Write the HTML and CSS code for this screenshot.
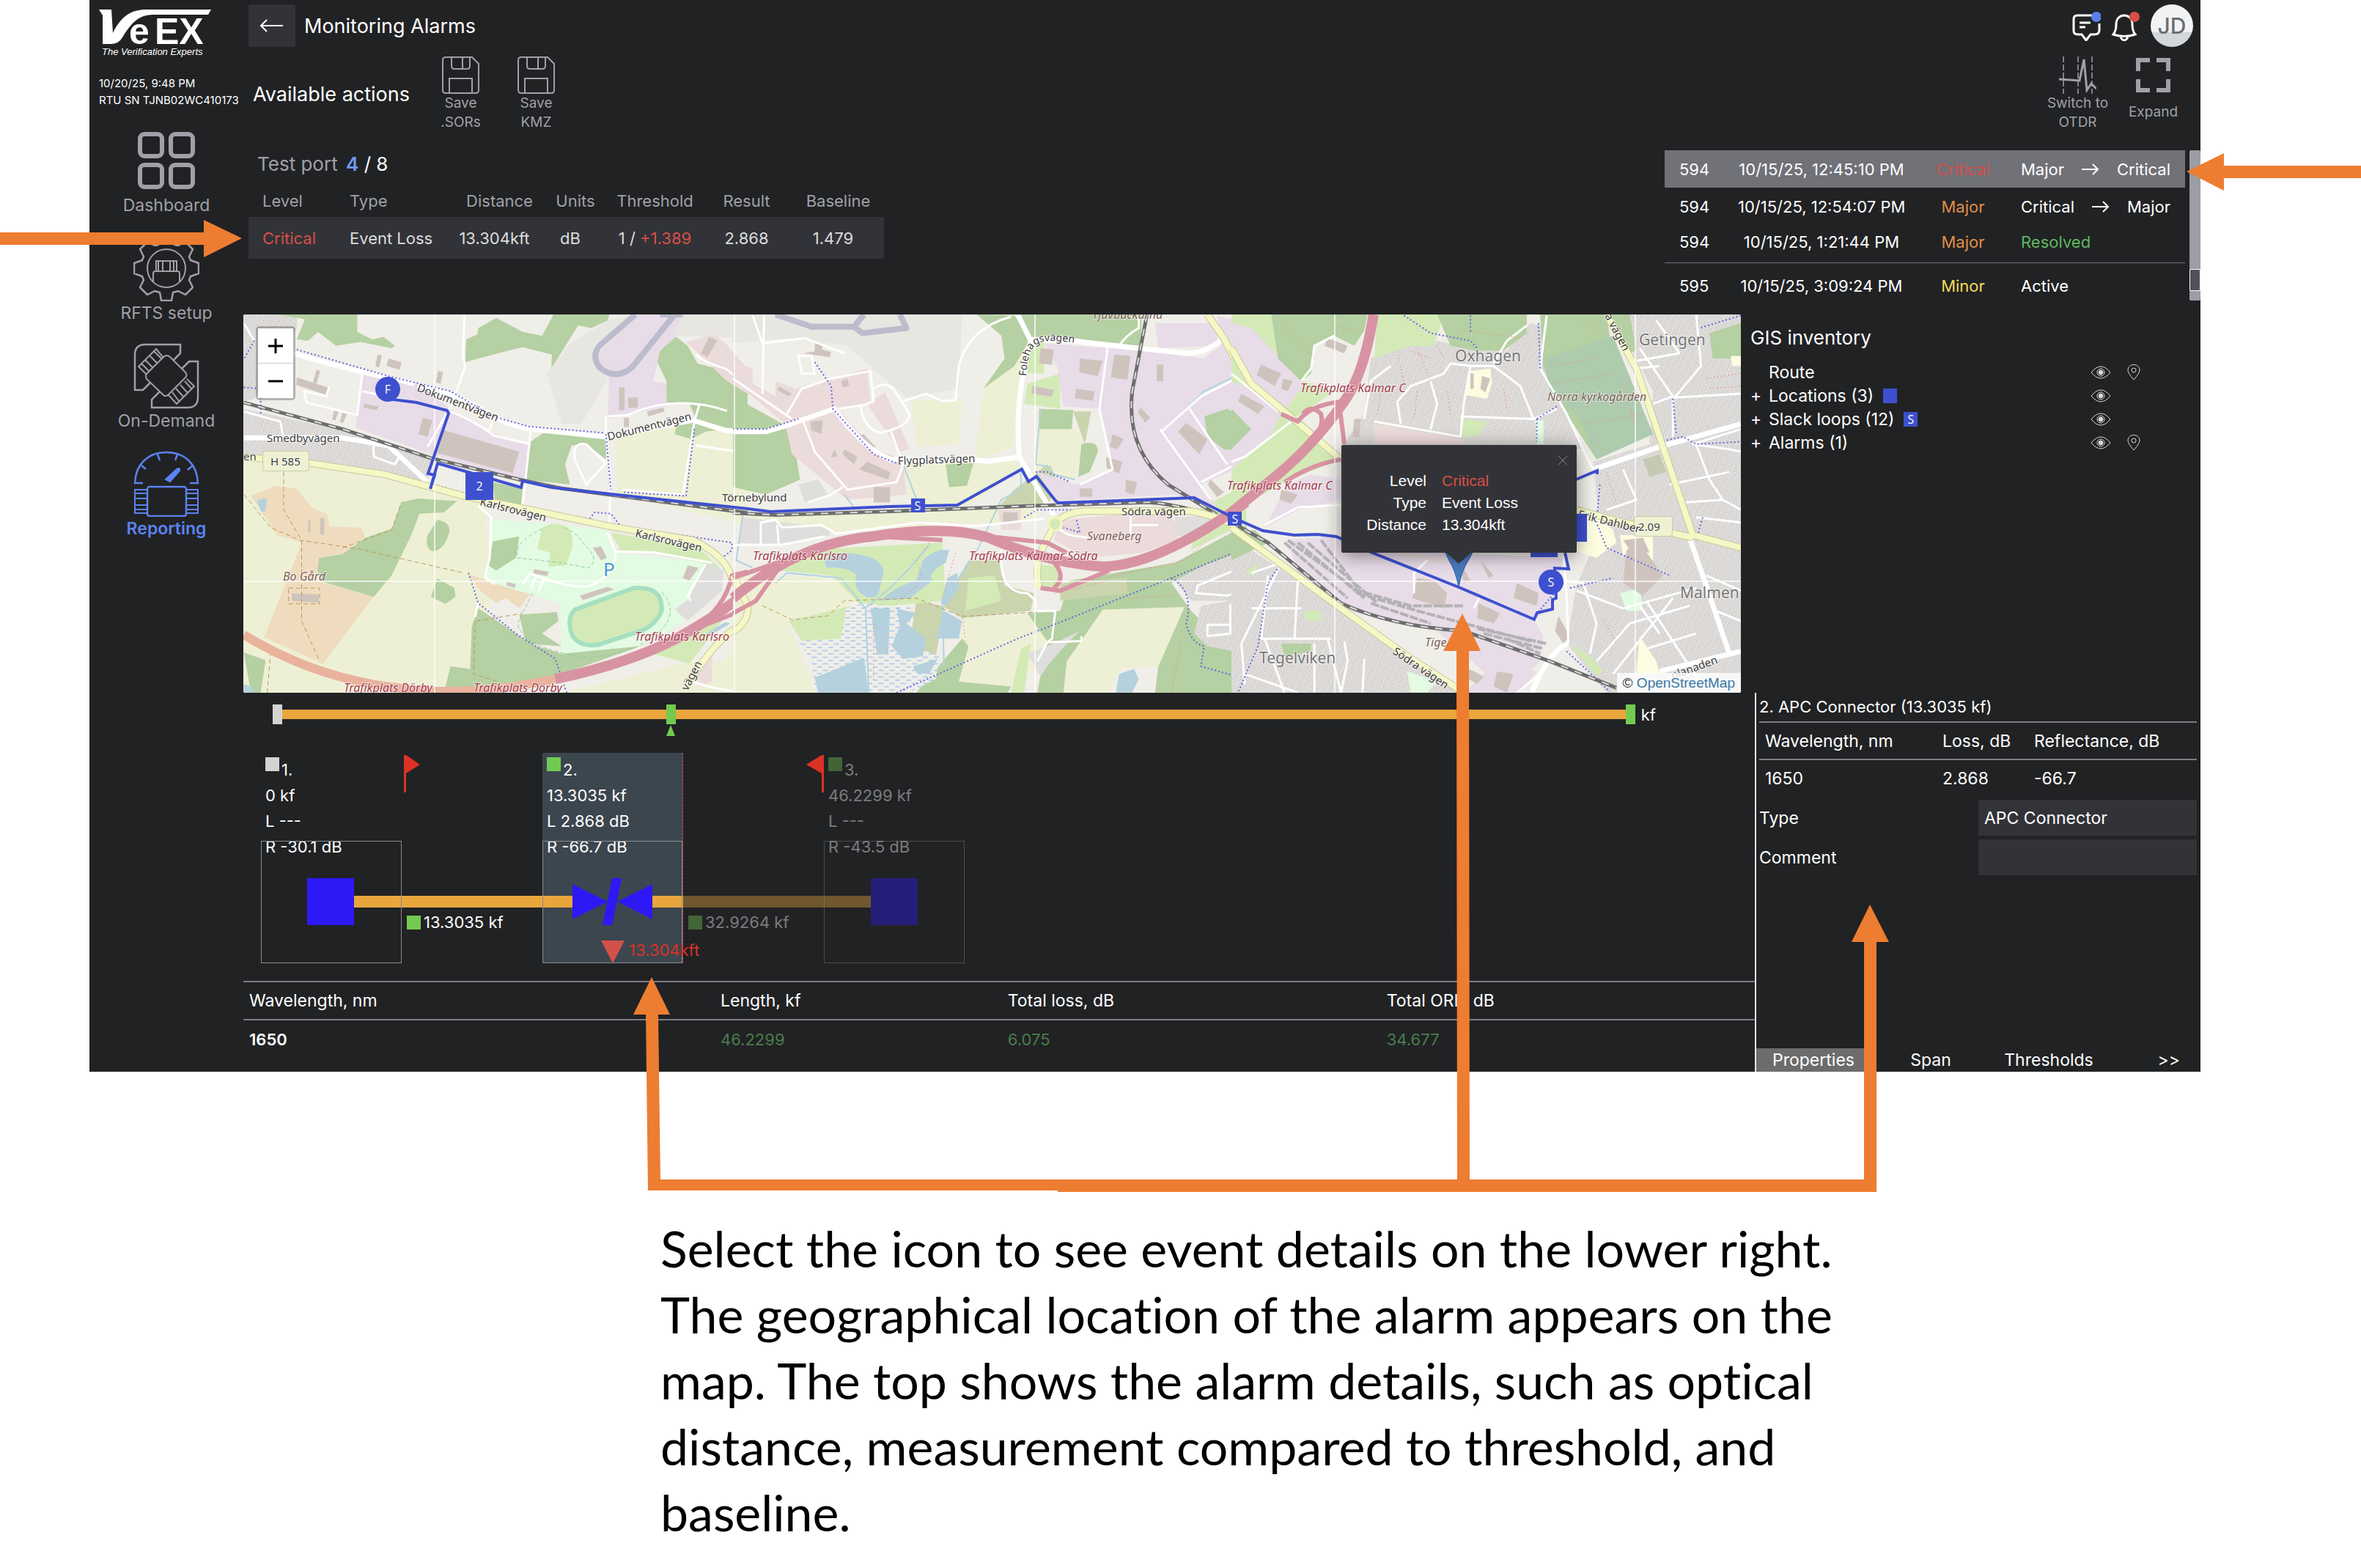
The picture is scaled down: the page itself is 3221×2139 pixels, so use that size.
FILE: index.html
```html
<!DOCTYPE html>
<html lang="en">
<head>
    <meta charset="UTF-8">
    <meta name="viewport" content="width=device-width, initial-scale=1.0">
    <title>Monitoring Alarms</title>
    <link rel="stylesheet" href="styles.css">
</head>
<body>
    <div class="guide">
        <div class="app">
            <aside class="sidebar">
                <svg class="logo" viewBox="0 0 160 54" role="img" aria-label="VeEX">
                    <path d="M0 4 L17 4 L19 36 C30 12 46 4 64 4 L153 4 L149 11 L74 11 C52 11 42 26 32 42 Q27 51 16 51 L5 51 L5 12 Z"/>
                    <text x="41" y="51">e</text>
                    <text x="76" y="51">EX</text>
                </svg>
                <p class="tagline">The Verification Experts</p>
                <p class="station">10/20/25, 9:48 PM<br>RTU SN TJNB02WC410173</p>
                <nav class="menu">
                    <a href="#" class="menu-item">
                        <svg viewBox="0 0 90 90"><g stroke-width="6"><rect x="9" y="9" width="30" height="30" rx="6"/><rect x="51" y="9" width="30" height="30" rx="6"/><rect x="9" y="51" width="30" height="30" rx="6"/><rect x="51" y="51" width="30" height="30" rx="6"/></g></svg>
                        <span>Dashboard</span>
                    </a>
                    <a href="#" class="menu-item">
                        <svg viewBox="0 0 90 90">
                            <polygon transform="translate(45 45)" stroke-width="2.5" stroke-linejoin="round" points="-11,-32 -7,-43 7,-43 11,-32 16,-31 26,-36 36,-26 31,-16 33,-11 44,-7 44,7 33,11 31,16 36,26 26,36 16,31 9,33 7,44 -7,44 -9,33 -16,31 -26,36 -36,26 -31,16 -33,11 -44,7 -44,-7 -33,-11 -31,-16 -36,-26 -26,-36 -16,-31"/>
                            <circle cx="45" cy="45" r="26"/>
                            <path d="M27 63 V52 Q27 49 30 49 H60 Q63 49 63 52 V63 M31 49 V35 H59 V49 M34 35 V49 M40 35 V49 M50 35 V49 M55 35 V49"/>
                        </svg>
                        <span>RFTS setup</span>
                    </a>
                    <a href="#" class="menu-item">
                        <svg viewBox="0 0 90 90">
                            <path stroke-width="2.5" d="M54 24 L64 14 V2 H16 Q2 2 2 16 V64 H13 L23 54 M66 35 L76 25 H88 V74 Q88 88 74 88 H25 V77 L36 66"/>
                            <path d="M45 17 Q48 17 50 19 L71 40 Q74 44 71 47 L48 70 Q44 74 41 71 L18 49 Q16 45 18 42 L40 20 Q43 17 45 17 Z M41 20 L31 8 L7 32 L17 42 M28 11 L38 21 M22 17 L32 27 M16 23 L26 33 M11 28 L21 38 M73 49 L83 59 L59 83 L48 71 M70 52 L79 62 M64 57 L74 68 M58 62 L68 73 M53 67 L62 79"/>
                        </svg>
                        <span>On-Demand</span>
                    </a>
                    <a href="#" class="menu-item active">
                        <svg viewBox="0 0 90 90">
                            <path stroke-width="2.5" d="M13 44 H2 C3 18 20 2 45 2 C70 2 87 18 88 44 H77 M33 5 L36 13 M60 5 L57 13 M11 20 L17 25 M81 20 L74 26"/>
                            <path fill="currentColor" d="M44 39 L59 25 Q64 22 63 27 L50 42 Z"/>
                            <rect x="19" y="49" width="53" height="40" rx="3" stroke-width="2.5"/>
                            <path d="M18 53 H2 V85 H18 M2 58 H18 M2 65 H18 M2 74 H18 M2 80 H18 M73 53 H88 V85 H73 M88 58 H73 M88 65 H73 M88 74 H73 M88 80 H73"/>
                        </svg>
                        <span>Reporting</span>
                    </a>
                </nav>
            </aside>

            <main class="main">
                <header class="topbar">
                    <button type="button" class="back-btn" aria-label="Back">
                        <svg viewBox="0 0 32 20"><path d="M31 10 H2 M9 2 L1 10 L9 18"/></svg>
                    </button>
                    <h1>Monitoring Alarms</h1>
                    <div class="account">
                        <button type="button" class="icon-btn" aria-label="Messages">
                            <svg viewBox="0 0 40 42"><path d="M28 7 H8 Q3 7 3 12 V28 Q3 33 9 33 H14 L20 41 L26 33 H31 Q38 33 38 27 V18 M11 17 H26 M11 23 H19"/><circle cx="34" cy="9" r="7" fill="#5b7fec" stroke="none"/></svg>
                        </button>
                        <button type="button" class="icon-btn" aria-label="Notifications">
                            <svg viewBox="0 0 40 42"><path d="M3 33 Q7 28 7 19 C7 3 29 3 29 19 Q29 28 33 33 Q18 38 3 33 Z M13 37 Q18 45 23 37"/><circle cx="32" cy="9" r="7" fill="#d84f47" stroke="none"/></svg>
                        </button>
                        <span class="avatar">JD</span>
                    </div>
                </header>

                <div class="actions">
                    <h2>Available actions</h2>
                    <button type="button" class="action">
                        <svg viewBox="0 0 51 51"><path d="M5 1 H41 L50 10 V46 Q50 50 46 50 H5 Q1 50 1 46 V5 Q1 1 5 1 Z M13 1 V13 Q13 17 17 17 H34 Q38 17 38 13 V1 M28 1 V17 M10 50 V30 H41 V50"/></svg>
                        Save<br>.SORs
                    </button>
                    <button type="button" class="action">
                        <svg viewBox="0 0 51 51"><path d="M5 1 H41 L50 10 V46 Q50 50 46 50 H5 Q1 50 1 46 V5 Q1 1 5 1 Z M13 1 V13 Q13 17 17 17 H34 Q38 17 38 13 V1 M28 1 V17 M10 50 V30 H41 V50"/></svg>
                        Save<br>KMZ
                    </button>
                    <button type="button" class="action action-right">
                        <svg viewBox="0 0 51 51"><path stroke-width="1.5" stroke-dasharray="8 3" d="M6 0 V51 M26 0 V51 M45 0 V51"/><path stroke-width="3" d="M0 31 L28 33 L34 4 L38 46 L44 37 L51 44"/></svg>
                        Switch to<br>OTDR
                    </button>
                    <button type="button" class="action action-expand">
                        <svg viewBox="0 0 51 51"><path stroke-width="6" d="M5 20 V5 H21 M30 5 H46 V20 M46 31 V46 H30 M21 46 H5 V31"/></svg>
                        Expand
                    </button>
                </div>

                <div class="alarm-row">
                    <section class="port">
                        <h2>Test port <b>4</b> <span>/ 8</span></h2>
                        <table class="measure">
                            <thead>
                                <tr><th>Level</th><th>Type</th><th>Distance</th><th>Units</th><th>Threshold</th><th>Result</th><th>Baseline</th></tr>
                            </thead>
                            <tbody>
                                <tr><td class="critical">Critical</td><td>Event Loss</td><td class="value">13.304kft</td><td class="value">dB</td><td>1 / <span class="critical">+1.389</span></td><td>2.868</td><td class="value">1.479</td></tr>
                            </tbody>
                        </table>
                    </section>
                    <section class="alarm-list">
                        <table>
                            <tbody>
                                <tr class="selected"><td>594</td><td>10/15/25, 12:45:10 PM</td><td class="critical">Critical</td><td><div class="change"><span>Major</span><svg viewBox="0 0 24 16"><path d="M0 8 H22 M15 1 L22 8 L15 15"/></svg><span>Critical</span></div></td></tr>
                                <tr><td>594</td><td>10/15/25, 12:54:07 PM</td><td class="major">Major</td><td><div class="change"><span>Critical</span><svg viewBox="0 0 24 16"><path d="M0 8 H22 M15 1 L22 8 L15 15"/></svg><span>Major</span></div></td></tr>
                                <tr class="last"><td>594</td><td>10/15/25, 1:21:44 PM</td><td class="major">Major</td><td class="resolved">Resolved</td></tr>
                                <tr class="next"><td>595</td><td>10/15/25, 3:09:24 PM</td><td class="minor">Minor</td><td>Active</td></tr>
                            </tbody>
                        </table>
                        <div class="scroll"><div class="scroll-thumb"></div></div>
                    </section>
                </div>

                <div class="map-row">
                    <section class="map">
                        <svg class="map-canvas" viewBox="0 0 2043 516" preserveAspectRatio="xMidYMid slice">
                            <defs>
                                <pattern id="houses" width="19" height="17" patternUnits="userSpaceOnUse" patternTransform="rotate(18)">
                                    <rect width="19" height="17" fill="#dfdedd"/>
                                    <rect x="2" y="2" width="4" height="3" fill="#c9bdb5"/><rect x="11" y="4" width="3" height="4" fill="#c9bdb5"/><rect x="5" y="11" width="4" height="3" fill="#c9bdb5"/><rect x="14" y="12" width="3" height="3" fill="#c9bdb5"/>
                                </pattern>
                                <pattern id="marsh" width="34" height="26" patternUnits="userSpaceOnUse">
                                    <rect width="34" height="26" fill="#f0eee8"/>
                                    <path d="M2 6 H18 M20 19 H34" stroke="#7db1f0" stroke-width="3"/>
                                </pattern>
                                <path id="folehag" d="M1068 84 Q1070 45 1084 40 Q1095 31 1160 43"/>
                            </defs>
                            <rect width="2043" height="516" fill="#f0eee8"/>

                            <!-- west -->
                            <g class="tile" transform="translate(-12 -9) scale(.4464 .3444)">
                                <path class="farm" d="M28 600 L300 640 L600 720 L760 770 L790 1080 L740 1524 L28 1524 Z M1160 500 L1568 440 V860 L1170 740 Z M1500 1400 L1568 1200 V1524 H1000 L1400 1400 Z"/>
                                <path class="homes" d="M28 26 L190 26 L190 80 L60 360 L28 370 Z M28 400 L350 490 L600 600 L590 690 L300 630 L28 580 Z"/>
                                <path class="wood" d="M130 26 H375 V95 L420 125 L455 115 L490 150 L480 160 L385 135 L310 150 L255 95 L225 130 L190 125 L215 45 Z M708 125 L742 105 L745 80 L800 40 L880 95 L940 110 L975 26 H1145 L1140 50 L1090 80 L1050 70 L968 240 L970 185 L880 155 L775 190 L705 215 Z M1340 105 L1385 150 L1415 220 L1500 250 L1568 340 V470 L1440 490 L1395 520 L1345 500 L1350 470 L1410 440 L1390 380 L1320 375 L1320 290 L1285 195 Z M905 530 L950 490 L1040 495 L1135 520 V600 L1075 540 L1030 545 L1010 620 L1025 700 L890 680 Z M790 690 L880 715 L875 790 L795 760 Z M510 770 L560 755 L680 765 L640 810 L565 815 L540 900 L480 1060 L425 1145 L270 1085 L252 1040 L258 990 L330 975 L400 910 L480 875 Z M620 840 Q665 850 655 895 Q640 960 605 965 Q580 950 590 900 Z M620 1072 L672 1110 L675 1145 L645 1172 L600 1145 Z M790 925 L870 905 L860 990 L800 1040 L775 1020 Z M745 1190 L860 1290 L900 1330 L1000 1370 L1210 1320 L1230 1345 L1000 1450 L750 1524 H640 L660 1420 L720 1430 L725 1260 Z M28 1365 L95 1395 L80 1524 H50 Z M870 1215 L985 1205 L990 1240 L940 1290 L1000 1340 L890 1330 Z"/>
                                <path class="works" d="M390 260 L560 300 L660 400 L770 490 L905 540 L890 690 L600 580 L370 475 Z M1230 26 H1370 L1370 90 L1300 170 L1280 290 L1320 300 L1320 390 L1140 440 L1145 285 L1100 190 Z M1185 910 L1260 910 V970 L1170 965 Z"/>
                                <path class="airfield" d="M1145 50 L1230 26 L1100 200 L1140 285 L1060 460 L1000 460 L955 260 L1025 140 Z M1370 26 H1568 V120 L1340 110 Z"/>
                                <path class="shops" d="M1380 135 L1465 105 L1500 140 L1568 240 V340 L1505 290 Z M1410 1420 L1460 1370 V1480 L1420 1500 Z"/>
                                <path class="yard" d="M50 745 L125 705 L190 715 L235 790 L285 820 L290 865 L385 870 L400 905 L330 975 L258 990 L250 1080 L425 1145 L270 1410 L90 1305 L205 930 L130 900 Z M712 1055 L905 1130 L870 1190 L830 1150 L800 1170 L750 1120 Z"/>
                                <path class="park" d="M790 835 L920 850 L1135 880 L1170 970 L1440 1010 L1390 1160 L1350 1200 L1380 1240 L1240 1340 L1000 1370 L995 1170 L765 1080 Z"/>
                                <path class="grass" d="M1150 890 L1420 950 L1490 1040 L1430 1010 L1270 970 L1180 960 Z M1280 1370 L1500 1220 L1420 1360 L1390 1410 Z M940 870 Q985 840 1020 870 Q1050 930 1010 1020 L960 1025 L965 970 L925 955 Z"/>
                                <path class="homes-plain" d="M1440 1010 L1495 1040 L1490 1120 L1385 1240 L1345 1195 L1390 1150 Z"/>
                                <path class="wood" d="M790 925 L870 905 L860 990 L800 1040 L775 1020 Z"/>
                                <path class="building" d="M640 485 L870 570 L850 655 L620 575 Z M575 435 L605 445 L590 510 L562 500 Z M190 275 L285 315 L280 345 L188 305 Z M250 245 L262 250 L250 300 L240 295 Z M470 200 L510 215 L505 245 L465 230 Z M437 185 L450 188 L442 235 L430 232 Z M395 380 L440 390 L435 405 L395 395 Z M622 250 L637 255 L630 300 L615 296 Z M305 405 L318 410 L308 445 L298 442 Z M330 415 L343 420 L332 455 L322 452 Z M1175 315 H1192 V405 H1175 Z M1203 355 H1232 V395 H1203 Z M1260 410 L1310 395 L1315 410 L1265 430 Z M1190 435 H1205 V472 H1190 Z M1450 115 L1475 130 L1445 195 L1425 180 Z M175 1130 L257 1135 L257 1168 L175 1160 Z M225 840 H232 V888 H225 Z M262 832 H274 V898 H262 Z M1095 950 L1120 945 L1138 990 L1120 1000 Z M915 1035 L960 1045 L955 1062 L913 1052 Z M1055 1140 L1140 1105 L1160 1115 L1065 1158 Z M1385 1020 L1418 1030 L1390 1080 L1370 1070 Z M1040 590 L1062 650 L1050 640 Z M832 1085 L860 1095 L855 1110 L832 1100 Z"/>
                                <path class="water" d="M68 762 L98 752 L95 805 L82 808 Z M28 1490 Q60 1500 60 1524 H28 Z M1440 1290 L1500 1245 L1515 1250 L1460 1292 Z"/>
                                <path class="runway" d="M1225 26 L1115 150 Q1090 190 1115 235 Q1165 290 1215 235 L1345 26 M1300 26 H1370"/>
                                <path class="street" d="M703 26 L698 190 L705 230 L665 380 L590 550 M390 265 L375 425 L220 375 L213 330 L280 350 L290 310 M390 330 L640 400 M905 485 L880 790 M1140 430 L1200 425 Q1350 340 1505 408 M1135 430 V500 L1150 700 L1145 850 M1410 545 L1568 575 M1185 720 L1370 740 L1405 450 L1420 385 M745 785 L785 830 L780 990 L765 1065 L795 1095 M1140 890 L1165 970 Q1160 1060 1090 1100 Q1040 1120 900 1050 M1165 965 L1280 968 L1460 1010 M1440 1015 L1385 1140 L1395 1160 M660 410 Q750 460 790 505 L905 540 M790 440 L778 490 M745 1165 L735 1225 M1410 185 Q1440 220 1500 240 L1568 310 M1135 615 L1075 540 Q1030 530 1040 600 L1075 700 L1110 650 Z M425 545 V590 L490 620 L505 585 M28 410 L140 450 L148 510 M28 60 L60 130 M1400 1480 Q1480 1520 1568 1520 M880 1095 L900 1055 M905 1110 L920 1065 M930 1120 L945 1075"/>
                                <path class="road" d="M28 515 H330 L470 545 L590 690 M180 180 Q300 230 550 300 M560 305 Q700 350 790 430 Q850 470 905 480 L1130 510 L1400 445 L1500 485 L1568 490"/>
                                <path class="cycle" d="M190 165 L470 270 L660 330 L790 430 L900 470 L1130 495 M1135 500 L1150 720 M1190 730 L1380 745 L1405 480 M610 700 L800 770 L1080 845 L1100 810 L1150 815 L1180 865 L1520 930 V960 L1480 1000 M715 1050 L745 1170 L860 1290 L980 1390 L1015 1524 M60 130 L30 200 M28 315 L80 320 L80 420"/>
                                <path class="track" d="M30 740 L110 870 L200 920 L380 955 L700 1050 M150 650 L150 800 L205 920 V1240 L260 1400 M165 1110 H260 V1172 H165 Z M330 950 L480 880 L510 770 M100 1524 L110 1370 M735 1240 L730 1450 L800 1478 M740 1240 L880 1210"/>
                                <path class="hedge" d="M940 875 Q850 930 865 990 L1000 1010 L1080 1030 Q1120 1000 1070 940 Q1040 880 1000 870 M910 1130 L865 1250 Q880 1350 1080 1385 Q1250 1370 1320 1250 Q1350 1180 1300 1120"/>
                                <path class="rail" d="M28 375 L330 480 L600 595 L870 680 L1000 715 L1568 812"/>
                                <path class="rail-dash" d="M28 375 L330 480 L600 595 L870 680 L1000 715 L1568 812"/>
                                <path class="main-case" d="M28 590 L230 615 L460 660 L700 745 L1145 865 L1400 920 Q1500 980 1520 1070 L1568 1180 M1568 1240 Q1480 1290 1380 1500"/>
                                <path class="main-road" d="M28 590 L230 615 L460 660 L700 745 L1145 865 L1400 920 Q1500 980 1520 1070 L1568 1180 M1568 1240 Q1480 1290 1380 1500"/>
                                <path class="trunk" d="M28 1295 Q250 1470 500 1505 Q700 1545 980 1470"/>
                                <path class="motorway" d="M980 1470 Q1200 1410 1350 1310 Q1500 1200 1568 1120"/>
                                <path class="ramp" d="M1400 1270 Q1500 1190 1520 1060 L1568 1045 M1430 1260 L1568 1190"/>
                                <path class="pitch" d="M1040 1195 L1220 1110 Q1310 1100 1305 1200 Q1290 1250 1250 1275 L1110 1335 Q1030 1345 1025 1260 Q1020 1220 1040 1195 Z"/>
                            </g>

                            <!-- centre -->
                            <g class="tile" transform="translate(668 -9) scale(.4464 .3444)">
                                <path class="airfield" d="M0 26 H700 L690 320 L530 355 L480 300 L350 150 L170 120 L0 140 Z"/>
                                <path class="farm" d="M545 365 L700 365 L690 540 L560 550 Z M765 320 L860 210 L900 130 L860 550 L740 600 Z M520 620 L860 600 L880 640 L700 800 L540 780 Z M0 1060 L380 1080 L340 1200 L170 1240 L250 1524 H0 Z M0 820 L560 800 L950 790 L920 840 L560 870 L300 890 Z M700 1230 L920 1210 L1000 1300 L900 1450 L850 1500 L690 1480 Z M1130 1195 L1380 1185 L1300 1420 L1180 1430 L1150 1524 H1010 L1020 1400 Z M930 410 L1060 490 L1070 560 L1040 680 L925 640 Z M0 500 L130 480 L100 640 L10 650 Z M170 1060 L370 1080 V1160 L270 1220 L180 1240 Z"/>
                                <path class="wood" d="M0 350 L180 480 L205 680 L100 740 L0 710 Z M745 26 L860 30 L910 120 L860 230 L765 320 L830 200 L820 110 Z M880 26 H1250 L1245 160 L1000 110 L910 120 Z M935 400 L1040 405 L1035 480 L935 480 Z M1065 540 Q1115 520 1115 570 L1090 650 L1055 670 Z M650 620 L735 615 L715 705 L660 710 Z M1030 1080 L1350 1010 L1568 860 V960 L1340 1090 L1400 1200 L1568 1420 V1524 H1290 L1300 1420 L1380 1185 L1130 1195 L1020 1400 L1010 1524 H930 L960 1320 L900 1210 L1000 1200 Z M560 1524 L700 1310 L720 1340 L690 1480 L850 1500 L840 1524 Z"/>
                                <path class="scrub" d="M720 1000 L820 1000 L830 1100 L920 1130 L910 1200 L700 1230 L640 1180 L560 1160 L540 1330 L620 1380 L650 1150 Z M1000 1090 L1200 1070 L1210 1130 L1000 1160 Z M860 720 L960 620 L1000 700 L960 780 L810 790 Z M1040 410 L1095 410 L1075 540 Z"/>
                                <path class="grass" d="M200 960 L640 930 L650 1160 L400 1190 L300 1060 L140 1040 Z M900 300 L1000 260 L1000 400 L890 380 Z M720 1070 L800 1060 L820 1160 L710 1200 Z M880 1350 L910 1330 L890 1524 H850 Z M170 1240 L360 1180 L330 1310 L210 1320 Z M930 1020 H1000 V1110 H940 Z M1420 800 L1568 700 V850 L1400 960 Z M900 160 L950 130 L950 260 H900 Z"/>
                                <path class="shops" d="M0 210 L60 240 L60 300 L130 350 L130 290 L190 320 L300 280 L410 240 L420 380 L320 400 L430 560 L520 600 L530 740 L350 760 L180 580 L160 460 L0 290 Z M410 380 L465 335 L540 560 L510 570 Z M1000 840 L1340 800 L1360 920 L1250 970 L1080 990 L980 920 Z M810 800 H880 V880 H820 Z"/>
                                <path class="works" d="M950 140 L1250 170 L1440 200 L1490 150 L1480 30 L1568 60 V620 L1430 700 L1480 790 L1350 740 L985 765 L930 650 L1050 700 L1160 640 L1120 400 L1010 390 L990 230 Z M1290 60 L1480 60 L1480 150 L1300 160 Z"/>
                                <path class="wood" d="M1440 430 L1510 400 L1568 440 V570 L1500 560 L1450 510 Z"/>
                                <path class="homes-plain" d="M200 700 L260 680 L290 740 L220 770 Z M30 830 L290 870 L300 900 L140 940 L20 930 Z M1350 830 L1480 820 L1430 920 L1350 900 Z M900 1370 L980 1330 L1060 1280 L1020 1330 L960 1420 L940 1460 Z"/>
                                <path class="homes" d="M1430 1180 L1568 1150 V1370 L1450 1340 L1410 1290 Z M1350 1080 L1440 1020 L1568 960 V1160 L1400 1160 Z"/>
                                <path fill="url(#marsh)" d="M345 1190 L400 1170 L550 1190 L530 1330 L630 1380 L620 1470 L540 1524 L250 1510 L240 1400 L200 1320 L330 1310 Z"/>
                                <path class="water" d="M310 970 Q460 970 460 1050 L445 1130 Q430 1160 400 1140 Q360 1100 380 1060 Q340 1020 285 1030 L280 1000 Z M580 1000 Q620 950 660 960 L650 1010 Q590 1050 610 1080 L540 1150 L450 1160 Q500 1100 560 1080 Z M655 1070 L685 1050 L690 1110 L650 1180 L635 1170 Z M420 1190 L480 1190 L475 1370 L440 1375 Z M500 1190 L560 1210 L530 1250 L590 1310 L580 1380 L520 1390 L485 1340 L510 1260 Z M645 1200 L700 1240 L690 1310 L620 1310 Z M250 1465 L400 1385 L415 1524 H260 Z M550 1420 L625 1390 L600 1450 L560 1445 Z M1180 1450 L1225 1430 L1240 1470 L1220 1524 H1170 Z"/>
                                <path class="stream" d="M130 1090 L165 1050 L330 1070 L380 1150 L405 1190 L415 1524 M600 940 L540 1030 L480 1110 L405 1190 M750 950 L720 1010 L640 1180 L645 1420 M880 640 V720 L820 760 L750 950 M940 400 L925 620 L970 630 L980 660 L1045 680 M520 620 L570 790 M340 740 L370 790 M1325 475 L1440 330 L1568 250 M30 820 L10 1000 L60 1030"/>
                                <path class="runway" d="M130 26 L240 75 L370 75 L400 26 M370 75 L395 100 L530 80 L510 26"/>
                                <path class="building" d="M940 160 L980 165 L975 225 L935 220 Z M1060 200 L1130 210 L1115 270 L1058 255 Z M1165 185 L1215 190 L1205 285 L1155 275 Z M1048 320 L1105 330 L1100 368 L1045 358 Z M915 308 L980 325 L975 352 L912 340 Z M1385 455 L1450 520 L1425 580 L1360 490 Z M1160 500 L1195 520 L1175 560 L1152 550 Z M1140 590 L1190 610 L1180 655 L1142 635 Z M1060 715 H1098 V748 H1060 Z M1245 395 L1275 435 L1260 455 L1238 415 Z M250 135 L275 140 L272 165 L300 175 L295 195 L215 180 L250 172 Z M400 500 L435 550 L425 560 L380 505 Z M235 450 L275 445 L270 500 L240 485 Z M410 610 L480 650 L475 680 L385 640 Z M340 560 L380 590 L370 620 L335 580 Z M430 710 H480 V770 H430 Z M310 560 L320 590 L300 590 Z M140 310 L180 340 L170 350 L135 325 Z M330 290 L350 280 L355 310 L335 315 Z M825 810 H870 V850 H825 Z M1200 680 L1235 690 L1225 740 L1200 730 Z M1295 225 h20 v65 h-20 Z M1460 680 L1500 730 L1480 750 L1450 700 Z"/>
                                <path class="street" d="M0 280 L180 440 M165 420 L210 320 L300 280 L420 250 L430 370 L400 385 L320 400 M390 390 Q400 480 450 495 Q540 470 540 420 L490 320 Q460 290 430 320 M520 370 L590 340 L640 370 L680 365 L690 230 Q720 80 850 35 M215 450 L250 570 L350 720 L500 690 L520 620 L480 480 M230 770 L300 740 L335 710 M85 850 L130 840 L150 870 L270 860 L310 890 M85 850 V935 M135 860 L140 940 M1145 155 L1120 400 L1160 640 L1060 700 M1180 150 Q1200 110 1240 80 V26 M1305 480 L1460 760 M1395 400 L1510 620 M1568 260 L1430 350 L1310 490 M1568 600 L1430 690 M1215 810 V900 M1215 860 H1300 M310 895 L570 850 L740 865 L950 835 M820 960 Q810 1130 900 1130 L925 1160 V1200 H985 L975 1310 L960 1325 L1065 1320 V1300 M960 1325 L930 1400 M1568 1020 L1420 1100 L1415 1130 L1510 1140 L1568 1120 M1520 1255 H1450 V1300 L1520 1290 V1180 L1568 1140 M60 30 L90 140 L220 120 L340 180 M95 26 L90 340 M200 190 H240 L250 260 H210 Z M970 860 L1030 900 L1085 910 M0 940 L150 938 L280 905"/>
                                <path class="road" d="M0 490 L100 490 Q160 470 220 440 L310 400 Q400 560 480 600 L720 600 L780 608 L880 590 M870 26 L910 130 Q860 350 875 590 L980 820 M910 125 L1030 130 L1240 160 L1390 180 Q1440 180 1490 130"/>
                                <path class="cycle" d="M250 215 L300 310 L305 400 L430 580 L500 615 M0 480 L100 480 L200 440 M500 1524 L680 1420 L870 1310 L1000 1245 L1340 1070 L1568 950 M1340 1070 Q1410 1120 1385 1250 Q1400 1330 1440 1340 L1430 1420 L1568 1470 M925 650 L960 650 L1030 690 M890 830 L930 800 L1040 800 M1050 840 L1060 890 L1010 870"/>
                                <path class="path" d="M600 930 L560 1000 L580 1080 L500 1170 M680 970 L640 1150 M430 1250 L430 1480 M700 1200 L710 1320 M1100 1080 L1380 1000 L1450 920 M1370 1320 L1340 1524 M985 1130 L1150 1080 M1205 1090 L1210 1150 L1350 1140"/>
                                <path class="track" d="M90 1180 L180 1235 L290 1220 L340 1160 L560 1150 L700 1222 L930 1205"/>
                                <path class="rail" d="M0 812 L130 820 L500 805 L900 785 L1270 770 Q1400 780 1568 880 M1265 26 L1220 330 Q1200 560 1330 700 L1480 820"/>
                                <path class="rail-dash" d="M0 812 L130 820 L500 805 L900 785 L1270 770 Q1400 780 1568 880 M1265 26 L1220 330 Q1200 560 1330 700 L1480 820"/>
                                <path class="main-case" d="M985 855 Q1010 810 1080 805 L1400 805 Q1490 825 1568 890 M985 855 L950 940 Q920 1020 935 1110 M0 1060 L45 1180 Q50 1240 0 1285 M1450 26 L1500 120 L1568 290"/>
                                <path class="main-road" d="M985 855 Q1010 810 1080 805 L1400 805 Q1490 825 1568 890 M985 855 L950 940 Q920 1020 935 1110 M0 1060 L45 1180 Q50 1240 0 1285 M1450 26 L1500 120 L1568 290"/>
                                <ellipse cx="984" cy="856" rx="20" ry="26" fill="#d3eab6" stroke="#f3f5c0" stroke-width="8"/>
                                <path class="motorway" d="M0 1150 Q200 930 430 905 Q650 860 780 910 Q960 1010 1130 1025 Q1300 1020 1568 770"/>
                                <path class="ramp" d="M0 1070 L200 980 M0 1210 L70 1160 L140 1030 M430 905 L640 920 M780 905 L960 930 L1020 970 M960 980 Q1030 1060 980 1110 M1150 1040 L1000 1120 L940 1110"/>
                            </g>

                            <!-- east -->
                            <g class="tile" transform="translate(1348 -9) scale(.4528 .3444)">
                                <path class="homes" d="M420 200 L520 140 L620 130 L740 170 L830 170 L900 60 L940 70 L950 200 L1020 440 L1060 560 L330 560 L400 420 Z M1150 26 H1535 V1524 H1130 L1010 1330 L1040 1100 L1110 880 L1090 610 L1260 540 L1270 330 Z M0 1000 L60 960 L330 1190 L650 1480 L700 1524 H0 Z"/>
                                <path class="grass" d="M0 26 H120 L140 200 L220 290 L310 330 L200 430 L330 600 L160 690 L0 810 Z M440 26 H640 L610 150 L540 150 L430 200 Z M430 460 L490 470 L480 520 L430 515 Z M690 440 L770 450 L740 510 L690 510 Z M220 1200 L270 1200 V1240 L225 1240 Z M1020 1330 L1080 1380 L1120 1440 L1100 1460 Z M40 1050 L80 1010 L70 1060 Z"/>
                                <path class="works" d="M0 60 L60 80 L220 300 L160 410 L50 290 L0 140 Z M0 290 L60 320 L150 420 L110 520 L0 640 Z M170 700 L240 660 L330 680 V760 L200 800 L100 870 Z M330 560 L700 520 V560 Z M170 920 L330 900 L460 960 L1000 990 L960 1190 L912 1235 L940 1300 L930 1400 L860 1480 L760 1440 L620 1280 L350 1200 L200 1060 Z M700 1524 L800 1400 L920 1440 L870 1524 Z"/>
                                <path class="wood" d="M120 26 H410 L400 90 L370 150 L310 110 L250 150 L240 260 L210 290 L140 200 Z M620 26 H890 V100 L820 170 L740 170 L660 150 Z M930 26 H1130 L1150 200 L1270 500 L1100 600 L1020 440 L940 240 Z M1140 26 H1200 L1220 170 L1190 180 Z M0 400 L60 480 L0 560 Z M1440 100 L1535 60 V200 L1450 200 Z M0 900 L70 880 L110 930 L0 1000 Z M150 1330 H240 V1360 L160 1380 Z"/>
                                <path class="cemetery" d="M940 200 L1150 110 L1270 500 L1100 600 L1050 440 L960 330 Z"/>
                                <path class="shops" d="M430 460 L690 520 V560 H430 Z M470 960 L660 1000 L640 1010 L500 980 Z"/>
                                <path class="school" d="M720 250 L780 240 L785 300 L770 360 L705 345 Z M1060 790 L1150 880 L1160 930 L1100 990 L1030 960 Z M1170 900 L1270 900 L1270 1000 L1180 980 Z M1230 1300 L1280 1400 L1290 1450 H1220 Z M1505 190 H1535 V230 H1508 Z"/>
                                <path class="park" d="M915 445 L940 445 L940 540 L920 540 Z M1170 1130 L1230 1110 L1240 1200 L1190 1200 Z M530 1440 L620 1480 L590 1524 H540 Z"/>
                                <path class="building" d="M90 225 L150 260 L130 310 L75 265 Z M155 280 L185 290 L170 330 L150 320 Z M30 340 L100 390 L80 420 L20 370 Z M150 720 L200 740 L180 775 L145 760 Z M370 440 L390 440 L385 515 L365 510 Z M560 1070 L610 1080 L650 1130 L640 1190 L545 1150 Z M860 1090 L925 1130 L920 1180 L850 1150 Z M745 1170 L810 1210 L790 1250 L740 1230 Z M690 1010 L720 1080 L700 1090 Z M750 1000 L790 1060 L775 1070 Z M1190 960 L1230 930 L1300 1060 L1240 1140 L1180 1090 Z M1180 920 L1240 910 L1260 970 L1200 960 Z M985 1220 L1020 1300 L1000 1330 L975 1280 Z M720 260 L730 260 L730 320 L720 320 Z M755 270 L780 280 L765 335 L750 320 Z M700 1420 L760 1460 L740 1490 L690 1450 Z M800 1440 L850 1450 L830 1524 L790 1500 Z M290 120 L350 150 L340 180 L280 150 Z"/>
                                <path fill="#c5c9b1" d="M1240 600 L1290 580 L1310 650 L1260 670 Z"/>
                                <path class="street" d="M0 260 L140 410 M200 430 L40 590 L0 610 M210 290 L240 240 L250 150 L310 110 M400 440 L420 290 L480 230 M430 450 L690 510 L700 380 L720 230 L660 220 L640 260 L540 310 L500 370 L510 460 M720 230 L790 230 L870 310 L910 440 L690 430 M600 290 L620 380 L600 480 M910 440 L980 400 M950 30 L930 240 L1010 420 L1070 590 L1090 640 M890 70 L830 130 L790 220 M1230 160 L1330 350 L1270 380 M1400 26 L1415 230 L1335 355 L1535 340 M1280 50 L1350 180 M1220 240 L1290 230 M1350 180 L1220 210 M1330 360 V510 M1535 480 L1390 540 L1500 560 L1535 570 M1400 540 L1440 680 L1480 760 L1535 800 M1320 700 L1500 650 M1370 770 L1480 760 M1400 830 L1535 850 M1180 640 L1220 760 L1130 800 M1000 1080 L1060 1090 L1100 1250 L1080 1370 M1040 1120 L1180 1190 L1400 1110 M1100 1400 L1200 1250 L1380 1180 M1150 1450 L1330 1150 M1400 1290 L1250 1350 M1460 1200 L1535 1240 M1430 1060 L1535 1120 M1230 1180 L1290 1290 M1250 1160 L1420 1500 M60 1050 L150 1010 L30 1330 L40 1490 M110 1060 L90 1310 L300 1310 M200 1080 L190 1310 M60 1190 H210 M250 1330 V1524 M290 1310 L330 1524 M100 1310 L160 1524 M40 1450 L200 1524 M340 1320 L350 1400 L330 1524 M400 1390 L395 1524 M1000 970 L1010 1140 L1015 1330 M730 1190 L750 1140 L860 1200 M550 1130 V1050 L590 1000 M100 860 L200 790 L330 780 M860 1524 L940 1440"/>
                                <path class="road" d="M1090 640 L1290 550 L1535 460 M1380 910 L1420 1060 L1500 1370 M1015 1330 Q960 1350 905 1524 M1290 1440 L1535 1360"/>
                                <path class="path" d="M500 170 L520 300 M560 160 L600 290 M620 150 L640 200 M700 90 L880 120 M960 230 L1100 200 M970 300 L1150 260 M1070 460 L1240 420 M1180 300 L1220 480 M450 330 L440 430 M560 330 L550 440 M650 330 L660 420 M150 60 L250 200 M300 60 L370 90 M1130 650 L1160 780 M1430 280 L1535 260 M1440 320 L1535 310 M1120 1230 L1160 1330 M820 320 L830 400 M1060 60 L1110 90 M540 170 L600 200"/>
                                <path class="cycle" d="M520 30 L600 100 L720 130 L740 160 M720 30 V100 M925 60 L930 240 M920 440 V530 M1330 360 L1340 500 M980 390 L920 440 M1000 1090 L920 1210 M150 1010 L110 1090 L80 1340 L20 1524 M1535 30 L1410 80 M1020 1110 L1150 1070 M1110 700 L1100 850 L1130 950 L1320 1060 M1290 530 L1360 510 L1400 540 L1535 530 M1420 830 L1400 920 M1010 1360 L1140 1520"/>
                                <path class="yard-rail" d="M170 920 L380 1120 L540 1180 L700 1180 M200 930 L400 1150 M230 930 L440 1170 M270 920 L380 1110 M160 930 L350 1150 M380 1130 L560 1200 L900 1320 M420 1170 L600 1250 M740 1270 L950 1330 M760 1290 L940 1350 M830 1310 L930 1370"/>
                                <path class="rail" d="M0 850 L110 930 L330 1170 Q480 1260 700 1280 L960 1400 L1160 1505"/>
                                <path class="rail-dash" d="M0 850 L110 930 L330 1170 Q480 1260 700 1280 L960 1400 L1160 1505"/>
                                <path class="main-case" d="M0 160 L60 300 L160 410 L330 600 M0 870 L330 1190 L520 1370 L700 1524 M1130 26 L1220 240 L1300 550 L1390 900 L1535 950 M1040 800 L1180 850 L1390 910"/>
                                <path class="main-road" d="M0 160 L60 300 L160 410 L330 600 M0 870 L330 1190 L520 1370 L700 1524 M1130 26 L1220 240 L1300 550 L1390 900 L1535 950 M1040 800 L1180 850 L1390 910"/>
                                <path class="motorway" d="M428 26 Q400 260 340 370 Q250 540 140 660 L0 810"/>
                                <path class="ramp" d="M340 370 Q240 380 200 450 L150 420 M340 540 Q330 430 325 390 M330 600 Q240 620 160 690 M215 420 Q240 380 270 420 Q280 480 240 540"/>
                            </g>

                            <path class="seam" d="M261 0 V516 M670 0 V516 M1080 0 V516 M1489 0 V516 M1899 0 V516 M0 364 H2043"/>

                            <g class="labels">
                                <text x="32" y="174">Smedbyvägen</text>
                                <text x="0" y="199">en</text>
                                <rect class="shield" x="27" y="187" width="62" height="26" rx="3"/>
                                <text x="37" y="206">H 585</text>
                                <text transform="translate(236 104) rotate(21)">Dokumentvägen</text>
                                <text transform="translate(498 172) rotate(-14)">Dokumentvägen</text>
                                <text transform="translate(322 260) rotate(14)">Karlsrovägen</text>
                                <text transform="translate(534 303) rotate(13)">Karlsrovägen</text>
                                <text x="653" y="255">Törnebylund</text>
                                <text transform="translate(606 514) rotate(-62)">vägen</text>
                                <text transform="translate(893 205) rotate(-2)">Flygplatsvägen</text>
                                <text class="curved"><textPath href="#folehag">Folehagsvägen</textPath></text>
                                <text x="1198" y="274">Södra vägen</text>
                                <text transform="translate(1567 462) rotate(34)">Södra vägen</text>
                                <text transform="translate(1857 2) rotate(62)">a vägen</text>
                                <rect class="shield" x="1898" y="276" width="51" height="26" rx="3"/>
                                <text transform="translate(1820 277) rotate(14)">Erik Dahlber</text>
                                <text x="1903" y="295">2.09</text>
                                <text transform="translate(1950 498) rotate(-20)">planaden</text>
                                <g class="place">
                                    <text x="1653" y="64">Oxhagen</text><text x="1904" y="42">Getingen</text><text x="1960" y="387">Malmen</text><text x="1386" y="476">Tegelviken</text>
                                </g>
                                <g class="junction">
                                    <text x="534" y="445">Trafikplats Karlsro</text><text x="137" y="515">Trafikplats Dörby</text><text x="314" y="515">Trafikplats Dörby</text><text x="695" y="335">Trafikplats Karlsro</text><text x="990" y="335">Trafikplats Kalmar Södra</text><text x="1442" y="106">Trafikplats Kalmar C</text><text x="1342" y="239">Trafikplats Kalmar C</text>
                                </g>
                                <g class="area">
                                    <text x="54" y="363">Bo Gård</text><text x="1151" y="308">Svaneberg</text><text x="1158" y="6">Tjuvbackarna</text><text x="1779" y="118">Norra kyrkogården</text><text x="1612" y="453">Tige</text>
                                </g>
                                <text class="parking" x="491" y="357">P</text>
                            </g>

                            <g class="route">
                                <path d="M197 115 L236 120 L278 131 L280 135 L252 217 L261 219 L255 238 L265 203 L341 225 L379 236 L381 227 L421 236 L501 245 L613 257 L688 265 L719 269 L882 262 L974 260 L1062 211 L1071 228 L1082 221 L1108 254 L1112 257 L1297 250 L1352 278 L1391 295 L1434 301 L1466 300 L1491 303 L1540 325 L1658 372 L1761 416 L1765 407 L1786 402 L1786 389 L1791 387 L1789 346 L1808 347 L1803 325 M1811 228 L1847 213 L1847 218"/>
                                <circle cx="197" cy="102" r="17"/><circle cx="1784" cy="365" r="17"/>
                                <rect x="303" y="215" width="38" height="38"/><rect x="911" y="251" width="19" height="19"/><rect x="1343" y="269" width="19" height="19"/><rect x="1756" y="294" width="37" height="37"/><rect x="1796" y="272" width="37" height="38"/>
                                <path class="pin" d="M1658 372 Q1654 350 1644 334 Q1636 320 1640 305 H1677 Q1681 322 1672 334 Q1662 350 1658 372 Z"/>
                                <text x="197" y="108">F</text><text x="322" y="240">2</text><text x="920" y="267">S</text><text x="1353" y="285">S</text><text x="1784" y="371">S</text>
                            </g>
                        </svg>
                        <div class="zoom">
                            <button type="button" aria-label="Zoom in"><svg viewBox="0 0 20 20"><path d="M0 10 H20 M10 0 V20"/></svg></button>
                            <button type="button" aria-label="Zoom out"><svg viewBox="0 0 20 20"><path d="M0 10 H20"/></svg></button>
                        </div>
                        <div class="popup">
                            <button type="button" class="popup-close" aria-label="Close"><svg viewBox="0 0 14 14"><path d="M1 1 L13 13 M13 1 L1 13"/></svg></button>
                            <dl>
                                <dt>Level</dt><dd class="critical">Critical</dd>
                                <dt>Type</dt><dd>Event Loss</dd>
                                <dt>Distance</dt><dd>13.304kft</dd>
                            </dl>
                        </div>
                        <div class="credit">© <a href="#">OpenStreetMap</a></div>
                    </section>

                    <section class="gis">
                        <h2>GIS inventory</h2>
                        <ul>
                            <li><i></i><span>Route</span><em></em><svg class="eye" viewBox="0 0 28 18"><path d="M1 9 Q14 -7 27 9 Q14 25 1 9 Z"/><circle cx="14" cy="9" r="5"/><circle cx="14" cy="9" r="3" fill="#d8d8d8"/></svg><svg class="spot" viewBox="0 0 18 22"><path d="M9 21 Q1 12 1 8 C1 -2 17 -2 17 8 Q17 12 9 21 Z"/><circle cx="9" cy="8" r="3"/></svg></li>
                            <li><i>+</i><span>Locations (3)</span><b class="chip"></b><em></em><svg class="eye" viewBox="0 0 28 18"><path d="M1 9 Q14 -7 27 9 Q14 25 1 9 Z"/><circle cx="14" cy="9" r="5"/><circle cx="14" cy="9" r="3" fill="#d8d8d8"/></svg><svg class="spot" viewBox="0 0 18 22"></svg></li>
                            <li><i>+</i><span>Slack loops (12)</span><b class="chip">S</b><em></em><svg class="eye" viewBox="0 0 28 18"><path d="M1 9 Q14 -7 27 9 Q14 25 1 9 Z"/><circle cx="14" cy="9" r="5"/><circle cx="14" cy="9" r="3" fill="#d8d8d8"/></svg><svg class="spot" viewBox="0 0 18 22"></svg></li>
                            <li><i>+</i><span>Alarms (1)</span><em></em><svg class="eye" viewBox="0 0 28 18"><path d="M1 9 Q14 -7 27 9 Q14 25 1 9 Z"/><circle cx="14" cy="9" r="5"/><circle cx="14" cy="9" r="3" fill="#d8d8d8"/></svg><svg class="spot" viewBox="0 0 18 22"><path d="M9 21 Q1 12 1 8 C1 -2 17 -2 17 8 Q17 12 9 21 Z"/><circle cx="9" cy="8" r="3"/></svg></li>
                        </ul>
                    </section>
                </div>

                <div class="trace-row">
                    <section class="trace">
                        <div class="overview">
                            <div class="fiber-bar">
                                <span class="mark mark-start"></span>
                                <span class="mark mark-event" style="left: 28.9%"></span>
                                <span class="mark mark-end"></span>
                            </div>
                            <span>kf</span>
                        </div>

                        <div class="events">
                            <div class="event">
                                <p><i class="dot dot-grey"></i>1.</p><p>0 kf</p><p>L ---</p><p>R -30.1 dB</p>
                                <svg viewBox="0 0 192 64"><rect x="96" y="24" width="96" height="16" fill="#e9a63d"/><rect x="63" width="64" height="64" fill="#2c19f5"/></svg>
                            </div>
                            <div class="link">
                                <svg class="flag" viewBox="0 0 24 51"><path d="M0 0 H3 L22 13 L3 25 V51 H0 Z"/></svg>
                                <div class="link-line"></div>
                                <p><i class="dot"></i>13.3035 kf</p>
                            </div>
                            <div class="event event-selected">
                                <p><i class="dot"></i>2.</p><p>13.3035 kf</p><p>L 2.868 dB</p><p>R -66.7 dB</p>
                                <svg viewBox="0 0 192 64"><path fill="#e9a63d" d="M0 24 H42 V40 H0 Z M150 24 H192 V40 H150 Z"/><path fill="#2c19f5" d="M41 8 L89 32 L41 56 Z M150 8 L102 32 L150 56 Z M95 0 H108 L95 64 H82 Z"/></svg>
                                <span class="fault"><i></i>13.304kft</span>
                            </div>
                            <div class="link faded">
                                <svg class="flag flag-right" viewBox="0 0 24 51"><path d="M24 0 H21 L0 13 L21 25 V51 H24 Z"/></svg>
                                <div class="link-line"></div>
                                <p><i class="dot"></i>32.9264 kf</p>
                            </div>
                            <div class="event faded">
                                <p><i class="dot"></i>3.</p><p>46.2299 kf</p><p>L ---</p><p>R -43.5 dB</p>
                                <svg viewBox="0 0 192 64"><rect y="24" width="64" height="16" fill="#e9a63d"/><rect x="64" width="64" height="64" fill="#2c19f5"/></svg>
                            </div>
                        </div>

                        <table class="totals">
                            <thead>
                                <tr><th>Wavelength, nm</th><th>Length, kf</th><th>Total loss, dB</th><th>Total ORL, dB</th></tr>
                            </thead>
                            <tbody>
                                <tr><td>1650</td><td>46.2299</td><td>6.075</td><td>34.677</td></tr>
                            </tbody>
                        </table>
                    </section>

                    <section class="details">
                        <h2>2. APC Connector (13.3035 kf)</h2>
                        <table>
                            <thead>
                                <tr><th>Wavelength, nm</th><th>Loss, dB</th><th>Reflectance, dB</th></tr>
                            </thead>
                            <tbody>
                                <tr><td>1650</td><td>2.868</td><td>-66.7</td></tr>
                            </tbody>
                        </table>
                        <form>
                            <label for="eventType">Type</label>
                            <input type="text" id="eventType" name="eventType" value="APC Connector">
                            <label for="eventComment">Comment</label>
                            <input type="text" id="eventComment" name="eventComment">
                        </form>
                        <div class="tabs">
                            <button type="button" class="current">Properties</button>
                            <button type="button">Span</button>
                            <button type="button">Thresholds</button>
                            <button type="button" class="more">&gt;&gt;</button>
                        </div>
                    </section>
                </div>
            </main>
        </div>

        <p class="caption">Select the icon to see event details on the lower right.<br>The geographical location of the alarm appears on the<br>map. The top shows the alarm details, such as optical<br>distance, measurement compared to threshold, and<br>baseline.</p>

        <svg class="callouts" viewBox="0 0 3221 2139" aria-hidden="true">
            <path d="M0 317 H278 V300 L330 325 L278 351 V334 H0 Z"/>
            <path d="M3221 226 H3034 V209 L2983 234 L3034 260 V243 H3221 Z"/>
            <path d="M889 1333 L914 1384 H898 L901 1609 H1988 L1987 888 H1969 L1995 837 L2020 888 H2004 L2005 1609 H2543 V1285 H2526 L2551 1234 L2577 1285 H2560 V1626 H1443 V1624 H884 L881 1384 H864 Z"/>
        </svg>
    </div>
</body>
</html>
```

FILE: styles.css
```css
* {
    box-sizing: border-box;
}
body {
    margin: 0;
    background: #fff;
    font-family: Inter, "Open Sans", sans-serif;
    font-size: 23px;
    color: #fff;
}
h1, h2, p, ul, dl, dd {
    margin: 0;
    padding: 0;
    font-weight: normal;
}
button {
    padding: 0;
    border: none;
    background: none;
    color: inherit;
    font: inherit;
    cursor: pointer;
}
svg {
    display: block;
    fill: none;
    stroke: currentColor;
    stroke-width: 2;
}
table {
    border-collapse: collapse;
    table-layout: fixed;
}
th, td {
    padding: 0;
    font-weight: normal;
    text-align: left;
}
.guide {
    position: relative;
    overflow: hidden;
}
.app {
    display: flex;
    margin: 0 219px 0 122px;
    background: #212224;
}
.critical {
    color: #d84f47;
}
.major {
    color: #e08e45;
}
.minor {
    color: #f2dc57;
}
.resolved {
    color: #5fb760;
}

/* sidebar */
.sidebar {
    width: 210px;
    flex: none;
    padding-top: 9px;
}
.logo {
    width: 160px;
    height: 54px;
    margin-left: 13px;
    overflow: visible;
    fill: #fff;
    stroke: none;
    font-family: "Liberation Sans", sans-serif;
    font-size: 50px;
    font-weight: bold;
}
.tagline {
    margin-left: 17px;
    font: italic 13px/16px "Liberation Sans", sans-serif;
}
.station {
    margin: 23px 0 0 13px;
    font-size: 15px;
    line-height: 23px;
    white-space: nowrap;
}
.menu {
    display: flex;
    flex-direction: column;
    gap: 25px;
    margin-top: 26px;
}
.menu-item {
    display: flex;
    flex-direction: column;
    align-items: center;
    color: #a0a0a8;
    line-height: 32px;
    text-decoration: none;
}
.menu-item svg {
    width: 90px;
    height: 90px;
}
.menu-item.active {
    color: #5b82f0;
    font-weight: 600;
}

.main {
    flex: 1;
    min-width: 0;
}

/* header */
.topbar {
    display: flex;
    align-items: center;
    height: 64px;
    padding: 6px 10px 0 7px;
}
.topbar h1 {
    margin-left: 12px;
    font-size: 27px;
}
.back-btn {
    width: 64px;
    height: 58px;
    border-radius: 2px;
    background: #323338;
}
.back-btn svg {
    width: 32px;
    margin: 0 auto;
}
.account {
    display: flex;
    align-items: center;
    gap: 14px;
    margin-left: auto;
}
.icon-btn svg {
    width: 40px;
    height: 42px;
    stroke-width: 3;
}
.avatar {
    width: 58px;
    height: 58px;
    border-radius: 50%;
    background: linear-gradient(#f1f3f5 65%, #d3d6da 65%);
    color: #6d6d70;
    font-size: 30px;
    font-weight: 500;
    line-height: 58px;
    text-align: center;
}

.actions {
    display: flex;
    height: 103px;
    margin-top: 13px;
    padding: 0 13px 0 13px;
}
.actions h2 {
    width: 232px;
    font-size: 27px;
    line-height: 103px;
}
.action {
    display: block;
    width: 103px;
    color: #a0a0a8;
    font-size: 19px;
    line-height: 26px;
}
.action svg {
    width: 51px;
    height: 51px;
    margin: 0 auto;
}
.action-right {
    margin-left: auto;
}
.action-expand {
    padding-bottom: 14px;
}
.action-expand svg {
    margin-bottom: 12px;
}

/* port and alarm list */
.alarm-row {
    display: flex;
    justify-content: space-between;
    height: 205px;
    margin-top: 25px;
}
.port {
    padding-left: 7px;
}
.port h2 {
    margin: 0 0 9px 12px;
    color: #a0a0a8;
    font-size: 26px;
    line-height: 38px;
}
.port h2 b {
    margin-left: 4px;
    color: #6f9bf7;
    font-weight: 600;
}
.port h2 span {
    color: #fff;
}
.measure {
    width: 867px;
    font-size: 22px;
}
.measure tr {
    height: 44px;
}
.measure th {
    width: 125px;
    color: #a0a0a8;
}
.measure th:nth-child(n+3), .measure td:nth-child(n+3) {
    text-align: center;
}
.measure th:first-child {
    width: 138px;
}
.measure th:first-child, .measure td:first-child {
    padding-left: 19px;
}
.measure th:nth-child(2) {
    width: 147px;
}
.measure th:nth-child(3) {
    width: 115px;
}
.measure th:nth-child(4) {
    width: 92px;
}
.measure tbody tr {
    height: 57px;
    background: #323338;
    color: #dcdcde;
}
.measure .value {
    padding-right: 14px;
}
.alarm-list {
    display: flex;
    gap: 6px;
    width: 731px;
    overflow: hidden;
}
.alarm-list table {
    width: 710px;
    font-size: 22px;
}
.alarm-list tr {
    height: 51px;
}
.alarm-list td {
    width: 228px;
    text-align: center;
    white-space: nowrap;
}
.alarm-list td:first-child {
    width: 100px;
    padding-left: 20px;
    text-align: left;
}
.alarm-list td:nth-child(3) {
    width: 158px;
}
.alarm-list td:last-child {
    width: 224px;
    padding-right: 20px;
    text-align: left;
}
.alarm-list .selected {
    background: #717178;
}
.alarm-list .last td {
    padding-bottom: 4px;
}
.alarm-list .next {
    height: 64px;
    border-top: 1px solid #717178;
}
.change {
    display: flex;
    align-items: center;
    justify-content: space-between;
}
.change svg {
    width: 24px;
    height: 16px;
}
.scroll {
    width: 15px;
    padding-top: 162px;
    border-radius: 2px;
    background: #9d9da6;
}
.scroll-thumb {
    height: 30px;
    border: 1px solid #fff;
    border-radius: 2px;
    background: #50515a;
}

/* map */
.map-row {
    display: flex;
    height: 516px;
    margin-top: 19px;
}
.map {
    position: relative;
    flex: 1;
    min-width: 0;
    border-radius: 2px;
    overflow: hidden;
}
.map-canvas {
    width: 100%;
    height: 516px;
    stroke: none;
}
.tile path {
    vector-effect: non-scaling-stroke;
}
.farm { fill: #eef0d5; }
.wood { fill: #b5d0a2; }
.works { fill: #e8dce8; }
.airfield { fill: #e7e6e1; }
.shops { fill: #ecdbdb; }
.yard { fill: #efdcbf; }
.park { fill: #e2fbe2; }
.grass { fill: #d3eab6; }
.scrub { fill: #cad5ae; }
.cemetery { fill: #aecbae; }
.school { fill: #fefce0; }
.homes { fill: url(#houses); }
.homes-plain { fill: #dfdedd; }
.building { fill: #cec4bd; }
.water { fill: #b5d1de; }
.street, .road, .cycle, .path, .track, .hedge, .rail, .rail-dash, .main-case, .main-road, .trunk, .motorway, .ramp, .runway, .stream, .yard-rail {
    fill: none;
    stroke-linejoin: round;
}
.street { stroke: #fff; stroke-width: 3; }
.road { stroke: #fff; stroke-width: 7; }
.cycle { stroke: #6565e0; stroke-width: 2; stroke-dasharray: 2 3; }
.path { stroke: #ee9186; stroke-width: 1; stroke-dasharray: 2 3; }
.track { stroke: #b99a57; stroke-width: 1; stroke-dasharray: 6 4; }
.hedge { stroke: #8fcb98; stroke-width: 1; stroke-dasharray: 5 3; }
.stream { stroke: #b0d3e2; stroke-width: 2; }
.yard-rail { stroke: #b4b2b4; stroke-width: 4; stroke-dasharray: 12 2; }
.rail { stroke: #6d6d6d; stroke-width: 5; }
.rail-dash { stroke: #ddd; stroke-width: 2; stroke-dasharray: 10 10; }
.main-case { stroke: #c5c99c; stroke-width: 10; }
.main-road { stroke: #f5f7c4; stroke-width: 8; }
.trunk { stroke: #e9b29d; stroke-width: 12; }
.motorway { stroke: #d893a3; stroke-width: 14; }
.ramp { stroke: #d893a3; stroke-width: 6; }
.runway { stroke: #bcbccd; stroke-width: 8; }
.pitch { fill: #d3eab6; stroke: #a6dfc1; stroke-width: 6; }
.seam { stroke: #fff; stroke-opacity: 0.7; }
.labels {
    font-family: "Noto Sans", sans-serif;
    font-size: 15px;
    fill: #3c3c3c;
    stroke: #fff;
    stroke-opacity: 0.6;
    stroke-width: 2;
    paint-order: stroke;
}
.shield {
    fill: #eff1d3;
    stroke: #c9cda5;
    stroke-opacity: 1;
}
.curved {
    font-size: 14px;
}
.place {
    font-size: 21px;
    fill: #777;
}
.junction {
    font-size: 16px;
    font-style: italic;
    fill: #a33a4a;
}
.area {
    font-size: 16px;
    font-style: italic;
    fill: #7d6258;
}
.parking {
    font-size: 26px;
    fill: #4c94d8;
}
.route {
    fill: #3e50cf;
}
.route path {
    fill: none;
    stroke: #3e50cf;
    stroke-width: 4;
}
.route .pin {
    fill: #4a79be;
    stroke: #3467a5;
    stroke-width: 1;
}
.route text {
    fill: #fff;
    font: 16px "Open Sans", sans-serif;
    text-anchor: middle;
}
.zoom {
    position: absolute;
    top: 16px;
    left: 17px;
    border: 3px solid rgba(0, 0, 0, 0.25);
    border-radius: 5px;
}
.zoom button {
    display: block;
    width: 48px;
    height: 47px;
    background: #fff;
}
.zoom button + button {
    height: 48px;
    border-top: 1px solid #ccc;
}
.zoom svg {
    width: 20px;
    height: 20px;
    margin: 0 auto;
    stroke: #000;
    stroke-width: 3;
}
.popup {
    position: absolute;
    top: 178px;
    right: 224px;
    width: 321px;
    height: 147px;
    padding-top: 34px;
    border-radius: 2px;
    background: #323338;
    box-shadow: 0 4px 26px rgba(0, 0, 0, 0.45);
    font: 21px/30px "Liberation Sans", sans-serif;
}
.popup::after {
    content: "";
    position: absolute;
    top: 100%;
    left: 143px;
    border: 17px solid transparent;
    border-top: 15px solid #323338;
    border-bottom: 0;
}
.popup dl {
    display: grid;
    grid-template-columns: 116px 1fr;
    column-gap: 21px;
}
.popup dt {
    text-align: right;
}
.popup-close {
    position: absolute;
    top: 14px;
    right: 12px;
    color: #8b8b8e;
}
.popup-close svg {
    width: 14px;
    height: 14px;
    stroke-width: 1;
}
.credit {
    position: absolute;
    right: 0;
    bottom: 0;
    padding: 0 8px;
    background: rgba(255, 255, 255, 0.8);
    color: #333;
    font: 19px/27px "Liberation Sans", sans-serif;
}
.credit a {
    color: #3978a8;
    text-decoration: none;
}

.gis {
    width: 627px;
    padding: 14px 82px 0 13px;
}
.gis h2 {
    margin-bottom: 13px;
    font-size: 26px;
    line-height: 36px;
}
.gis ul {
    list-style: none;
}
.gis li {
    display: flex;
    align-items: center;
    height: 32px;
}
.gis i {
    width: 25px;
    font-style: normal;
}
.gis em {
    margin-left: auto;
}
.chip {
    width: 19px;
    height: 20px;
    margin-left: 13px;
    background: #3e50cf;
    font: 16px/20px "Open Sans", sans-serif;
    text-align: center;
}
.eye {
    width: 28px;
    height: 18px;
    color: #d8d8d8;
    stroke-width: 1;
}
.spot {
    width: 18px;
    height: 22px;
    margin-left: 22px;
    color: #d8d8d8;
    stroke-width: 1;
}

/* fibre trace */
.trace-row {
    display: flex;
}
.trace {
    flex: 1;
    min-width: 0;
    padding: 16px 0 19px;
}
.overview {
    display: flex;
    gap: 8px;
    height: 42px;
    padding: 0 135px 0 40px;
    font-size: 22px;
    line-height: 28px;
}
.fiber-bar {
    position: relative;
    flex: 1;
    height: 13px;
    margin-top: 7px;
    background: #e9a63d;
}
.mark {
    position: absolute;
    top: -7px;
    width: 13px;
    height: 27px;
    background: #72cb50;
}
.mark-start {
    left: 0;
    background: #d3d3d3;
}
.mark-end {
    right: 0;
}
.mark-event::after {
    content: "";
    position: absolute;
    top: 28px;
    left: 0;
    border: 6px solid transparent;
    border-top: 0;
    border-bottom: 15px solid #72cb50;
}
.events {
    display: flex;
    height: 287px;
    margin: 24px 0 24px 24px;
    font-size: 22px;
}
.event {
    position: relative;
    width: 192px;
    padding-top: 6px;
}
.event::after {
    content: "";
    position: absolute;
    right: 0;
    bottom: 0;
    left: 0;
    height: 165px;
    border: 1px solid #898b8d;
}
.event p {
    padding-left: 6px;
    line-height: 35px;
    white-space: nowrap;
}
.event p:first-child {
    display: flex;
    gap: 3px;
}
.event svg {
    width: 192px;
    height: 64px;
    margin-top: 25px;
    stroke: none;
}
.event-selected {
    border-right: 1px dashed #d84f47;
    background: #3c464f;
}
.faded > p, .faded > svg:not(.flag), .faded .link-line, .event.faded::after {
    opacity: 0.4;
}
.dot {
    width: 19px;
    height: 19px;
    flex: none;
    background: #72cb50;
}
.dot-grey {
    background: #d3d3d3;
}
.link {
    width: 192px;
    padding-top: 3px;
}
.link p {
    display: flex;
    align-items: center;
    gap: 4px;
    padding: 7px 0 0 7px;
    white-space: nowrap;
}
.flag {
    width: 24px;
    height: 51px;
    margin-left: 3px;
    fill: #dc3224;
    stroke: none;
}
.flag-right {
    margin-left: auto;
}
.link-line {
    height: 16px;
    margin-top: 141px;
    background: #e9a63d;
}
.fault {
    position: absolute;
    bottom: 0;
    left: 80px;
    z-index: 1;
    display: flex;
    gap: 6px;
    color: #dc3224;
}
.fault i {
    border: 16px solid transparent;
    border-top: 31px solid #d2524a;
    border-bottom: 0;
}
.totals {
    width: 100%;
}
.totals tr {
    height: 52px;
    border-top: 2px solid #7b7d80;
}
.totals th {
    width: 19%;
}
.totals th:first-child {
    width: 643px;
}
.totals th:nth-child(3) {
    width: 517px;
}
.totals th:last-child {
    width: auto;
}
.totals th, .totals td {
    padding-left: 8px;
}
.totals td {
    color: #4b7c4c;
    font-size: 22px;
}
.totals td:first-child {
    color: #fff;
    font-weight: 600;
}

/* event details */
.details {
    display: flex;
    flex-direction: column;
    width: 608px;
    border-left: 2px solid #e6e6e6;
}
.details h2 {
    margin-left: 4px;
    font-size: 22px;
    line-height: 39px;
}
.details table {
    width: calc(100% - 9px);
    margin-left: 4px;
}
.details tr {
    height: 51px;
    border-top: 2px solid #7b7d80;
}
.details th, .details td {
    padding-left: 8px;
}
.details th:first-child {
    width: 242px;
}
.details th:nth-child(2) {
    width: 125px;
}
.details form {
    display: grid;
    grid-template-columns: 1fr 298px;
    row-gap: 5px;
    align-items: center;
    margin: 4px 5px 0 4px;
}
.details input {
    height: 49px;
    padding: 0 8px;
    border: none;
    background: #323338;
    color: #fff;
    font: inherit;
}
.tabs {
    display: grid;
    grid-template-columns: 156px 164px 158px 1fr;
    height: 32px;
    margin-top: auto;
}
.tabs .current {
    background: #6c6c6c;
}
.tabs .more {
    padding-right: 28px;
    text-align: right;
}

.caption {
    margin: 196px 0 31px 901px;
    color: #000;
    font-family: Lato, sans-serif;
    font-size: 68px;
    font-variant-ligatures: none;
    line-height: 90px;
    white-space: nowrap;
}
.callouts {
    position: absolute;
    top: 0;
    left: 0;
    width: 100%;
    fill: #ed7d31;
    stroke: none;
    pointer-events: none;
}
```
